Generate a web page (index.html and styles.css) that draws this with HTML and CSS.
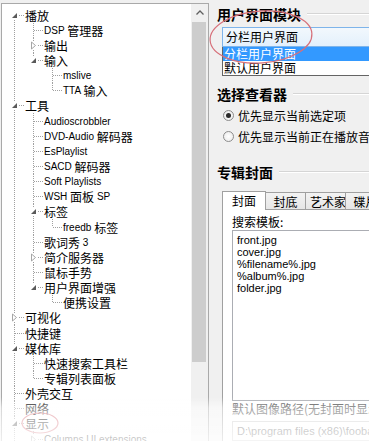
FILE: index.html
```html
<!DOCTYPE html>
<html lang="zh-CN">
<head>
    <meta charset="UTF-8">
    <title>首选项</title>
    <link rel="stylesheet" href="styles.css">
</head>
<body>
    <!-- 左侧：设置树 -->
    <div class="tree-box">
        <div class="tree">
            <ul>
                <li>
                    <div class="node"><span class="tw"><svg width="9" height="9"><rect width="9" height="9" fill="#fff"/><path d="M7 2V7H2Z" fill="#595959"/></svg></span>播放</div>
                    <ul>
                        <li><div class="node"><span class="tw"></span><span class="en">DSP </span>管理器</div></li>
                        <li><div class="node"><span class="tw"><svg width="9" height="9"><rect width="9" height="9" fill="#fff"/><path d="M2.5 1L6.5 4.5L2.5 8Z" fill="#fff" stroke="#a6a6a6"/></svg></span>输出</div></li>
                        <li class="last">
                            <div class="node"><span class="tw"><svg width="9" height="9"><rect width="9" height="9" fill="#fff"/><path d="M7 2V7H2Z" fill="#595959"/></svg></span>输入</div>
                            <ul>
                                <li><div class="node"><span class="tw"></span><span class="en">mslive</span></div></li>
                                <li class="last"><div class="node"><span class="tw"></span><span class="en">TTA </span>输入</div></li>
                            </ul>
                        </li>
                    </ul>
                </li>
                <li>
                    <div class="node"><span class="tw"><svg width="9" height="9"><rect width="9" height="9" fill="#fff"/><path d="M7 2V7H2Z" fill="#595959"/></svg></span>工具</div>
                    <ul>
                        <li><div class="node"><span class="tw"></span><span class="en">Audioscrobbler</span></div></li>
                        <li><div class="node"><span class="tw"></span><span class="en">DVD-Audio </span>解码器</div></li>
                        <li><div class="node"><span class="tw"></span><span class="en">EsPlaylist</span></div></li>
                        <li><div class="node"><span class="tw"></span><span class="en">SACD </span>解码器</div></li>
                        <li><div class="node"><span class="tw"></span><span class="en">Soft Playlists</span></div></li>
                        <li><div class="node"><span class="tw"></span><span class="en">WSH </span>面板<span class="en"> SP</span></div></li>
                        <li>
                            <div class="node"><span class="tw"><svg width="9" height="9"><rect width="9" height="9" fill="#fff"/><path d="M7 2V7H2Z" fill="#595959"/></svg></span>标签</div>
                            <ul>
                                <li class="last"><div class="node"><span class="tw"></span><span class="en">freedb </span>标签</div></li>
                            </ul>
                        </li>
                        <li><div class="node"><span class="tw"></span>歌词秀<span class="en"> 3</span></div></li>
                        <li><div class="node"><span class="tw"><svg width="9" height="9"><rect width="9" height="9" fill="#fff"/><path d="M2.5 1L6.5 4.5L2.5 8Z" fill="#fff" stroke="#a6a6a6"/></svg></span>简介服务器</div></li>
                        <li><div class="node"><span class="tw"></span>鼠标手势</div></li>
                        <li class="last">
                            <div class="node"><span class="tw"><svg width="9" height="9"><rect width="9" height="9" fill="#fff"/><path d="M7 2V7H2Z" fill="#595959"/></svg></span>用户界面增强</div>
                            <ul>
                                <li class="last"><div class="node"><span class="tw"></span>便携设置</div></li>
                            </ul>
                        </li>
                    </ul>
                </li>
                <li><div class="node"><span class="tw"><svg width="9" height="9"><rect width="9" height="9" fill="#fff"/><path d="M2.5 1L6.5 4.5L2.5 8Z" fill="#fff" stroke="#a6a6a6"/></svg></span>可视化</div></li>
                <li><div class="node"><span class="tw"></span>快捷键</div></li>
                <li>
                    <div class="node"><span class="tw"><svg width="9" height="9"><rect width="9" height="9" fill="#fff"/><path d="M7 2V7H2Z" fill="#595959"/></svg></span>媒体库</div>
                    <ul>
                        <li><div class="node"><span class="tw"></span>快速搜索工具栏</div></li>
                        <li class="last"><div class="node"><span class="tw"></span>专辑列表面板</div></li>
                    </ul>
                </li>
                <li><div class="node"><span class="tw"></span>外壳交互</div></li>
                <li><div class="node"><span class="tw"></span>网络</div></li>
                <li>
                    <div class="node"><span class="tw"><svg width="9" height="9"><rect width="9" height="9" fill="#fff"/><path d="M7 2V7H2Z" fill="#595959"/></svg></span>显示</div>
                    <ul>
                        <li><div class="node"><span class="tw"><svg width="9" height="9"><rect width="9" height="9" fill="#fff"/><path d="M2.5 1L6.5 4.5L2.5 8Z" fill="#fff" stroke="#a6a6a6"/></svg></span><span class="en">Columns UI extensions</span></div></li>
                    </ul>
                </li>
            </ul>
        </div>
        <div class="vscroll">
            <div class="up"><svg width="8" height="5"><path d="M0.5 4.5L4 1L7.5 4.5" fill="none" stroke="#606060" stroke-width="1.3"/></svg></div>
            <div class="thumb"></div>
        </div>
    </div>

    <!-- 右侧：设置页 -->
    <div class="settings">
        <div class="group-title">用户界面模块</div>
        <div class="group-body">
            <div class="combo">分栏用户界面</div>
            <div class="drop">
                <div class="sel">分栏用户界面</div>
                <div>默认用户界面</div>
            </div>
        </div>

        <div class="group-title second">选择查看器</div>
        <div class="group-body">
            <div class="radio"><span class="dot on"></span>优先显示当前选定项</div>
            <div class="radio"><span class="dot"></span>优先显示当前正在播放音轨</div>
        </div>

        <div class="group-title third">专辑封面</div>
        <div class="group-body">
            <div class="tabs">
                <span class="tab active">封面</span>
                <span class="tab">封底</span>
                <span class="tab">艺术家</span>
                <span class="tab">碟片</span>
            </div>
            <div class="tab-page">
                <div class="label">搜索模板:</div>
                <div class="textarea">
                    <div>front.jpg</div>
                    <div>cover.jpg</div>
                    <div>%filename%.jpg</div>
                    <div>%album%.jpg</div>
                    <div>folder.jpg</div>
                </div>
                <div class="label">默认图像路径(无封面时显示)</div>
                <div class="input">D:\program files (x86)\foobar2000\</div>
            </div>
        </div>
    </div>

    <!-- 截图上的红圈标注 -->
    <svg class="marks" width="369" height="441">
        <ellipse cx="261" cy="37" rx="51" ry="26" fill="none" stroke="#d7707a" stroke-width="1.2" transform="rotate(-4 261 37)"/>
        <ellipse cx="40" cy="423" rx="18" ry="10" fill="none" stroke="#d7707a" stroke-width="1.2"/>
    </svg>
    <div class="fade"></div>
</body>
</html>
```

FILE: styles.css
```css
body {
    margin: 0;
    width: 369px;
    height: 441px;
    overflow: hidden;
    background-color: #f0f0f0;
    font-family: "Noto Sans CJK SC", sans-serif;
    font-size: 12px;
    color: #000;
    display: flex;
    align-items: flex-start;
}

/* 左侧树 */
.tree-box {
    margin: 3px 0 0 1px;
    width: 206px;
    height: 470px;
    border: 1px solid #a9a9a9;
    border-bottom: 0;
    background-color: #fff;
    display: flex;
    flex: none;
}

.tree {
    flex: 1;
    padding-top: 3.5px;
    overflow: hidden;
}

.tree ul {
    list-style: none;
    margin: 0;
    padding: 0;
}

.tree li ul {
    padding-left: 19px;
}

/* 竖向虚线 */
.tree li {
    background: repeating-linear-gradient(to bottom, #a0a0a0 0 1px, transparent 1px 2px) 12px 0 / 1px 100% no-repeat;
}

.tree li.last {
    background-size: 1px 8px;
}

.tree > ul > li:first-child {
    background-position: 12px 8px;
}

.node {
    display: flex;
    align-items: center;
    height: 15.15px;
    line-height: 15px;
    white-space: nowrap;
}

/* 展开箭头 + 横向虚线 */
.tw {
    width: 23px;
    height: 100%;
    flex: none;
    display: flex;
    align-items: center;
    background: repeating-linear-gradient(to right, #a0a0a0 0 1px, transparent 1px 2px) 13px 50% / 10px 1px no-repeat;
}

.tw svg {
    margin-left: 8px;
    display: block;
}

.en {
    font-family: "Liberation Sans", sans-serif;
    font-size: 10px;
    white-space: pre;
}

/* 滚动条 */
.vscroll {
    width: 17px;
    flex: none;
    background-color: #f0f0f0;
    display: flex;
    flex-direction: column;
}

.vscroll .up {
    height: 17px;
    display: flex;
    align-items: center;
    justify-content: center;
}

.vscroll .thumb {
    margin: 1px 2px 0 1px;
    height: 340px;
    background-color: #cdcdcd;
}

/* 右侧设置页 */
.settings {
    flex: 1;
    min-width: 0;
    padding: 5px 0 0 8px;
}

.group-title {
    display: flex;
    align-items: center;
    gap: 6px;
    font-size: 14px;
    font-weight: bold;
    line-height: 18px;
    white-space: nowrap;
}

.group-title::after {
    content: "";
    flex: 1;
    height: 0;
    border-top: 1px solid #d5d5d5;
    border-bottom: 1px solid #fff;
}

.group-title.second {
    margin-top: 9px;
}

.group-title.third {
    margin-top: 16px;
}

.group-body {
    padding-left: 5px;
}

.combo {
    margin-top: 4px;
    width: 220px;
    height: 18px;
    line-height: 18px;
    padding-left: 3px;
    border: 1px solid #7eb4ea;
    background: linear-gradient(#f2f8fd, #e3f0fc);
    white-space: nowrap;
}

.drop {
    width: 220px;
    border: 1px solid #646464;
    border-top: 0;
    background-color: #fff;
}

.drop div {
    height: 14px;
    line-height: 14px;
    padding-left: 1px;
}

.drop .sel {
    background-color: #3399ff;
    color: #fff;
}

.radio {
    display: flex;
    align-items: center;
    gap: 4px;
    height: 21px;
    white-space: nowrap;
}

.radio:first-child {
    margin-top: 2px;
}

.dot {
    width: 11px;
    height: 11px;
    box-sizing: border-box;
    margin-left: 1px;
    border: 1px solid #8c8c8c;
    border-radius: 50%;
    background: radial-gradient(#fff, #e8e8e8);
    display: flex;
    align-items: center;
    justify-content: center;
    flex: none;
}

.dot.on::after {
    content: "";
    width: 5px;
    height: 5px;
    border-radius: 50%;
    background-color: #2a2a2a;
}

/* 选项卡 */
.tabs {
    margin-top: 8px;
    height: 20px;
    display: flex;
    align-items: flex-end;
    white-space: nowrap;
}

.tab {
    min-width: 41px;
    box-sizing: border-box;
    height: 17px;
    line-height: 17px;
    padding: 0 4px;
    margin-left: -1px;
    text-align: center;
    border: 1px solid #a0a0a0;
    border-bottom: 0;
    background: linear-gradient(#f3f3f3, #e6e6e6);
}

.tab:first-child {
    margin-left: 0;
}

.tab.active {
    min-width: 44px;
    height: 19px;
    line-height: 18px;
    background: #fff;
    position: relative;
    z-index: 1;
    margin-bottom: -1px;
}

.tab-page {
    width: 200px;
    height: 260px;
    padding: 5px 0 0 9px;
    border: 1px solid #a0a0a0;
    background-color: #fff;
}

.label {
    line-height: 14px;
    white-space: nowrap;
}

.textarea {
    margin-top: 1px;
    height: 163px;
    padding: 3px 4px;
    border: 1px solid #abadb3;
    font-family: "Liberation Sans", sans-serif;
    font-size: 11px;
    line-height: 12px;
}

.textarea + .label {
    margin-top: 1px;
    color: #333;
}

.input {
    margin-top: 5px;
    height: 18px;
    line-height: 18px;
    padding-left: 4px;
    border: 1px solid #c8c8c8;
    font-family: "Liberation Sans", sans-serif;
    font-size: 11px;
    color: #555;
    white-space: nowrap;
}

/* 标注层 */
.marks {
    position: fixed;
    left: 0;
    top: 0;
    pointer-events: none;
}

.fade {
    position: fixed;
    left: 0;
    bottom: 0;
    width: 369px;
    height: 44px;
    background: linear-gradient(rgba(255, 255, 255, 0), rgba(255, 255, 255, 0.55) 25%, rgba(255, 255, 255, 0.8));
    pointer-events: none;
}
```
